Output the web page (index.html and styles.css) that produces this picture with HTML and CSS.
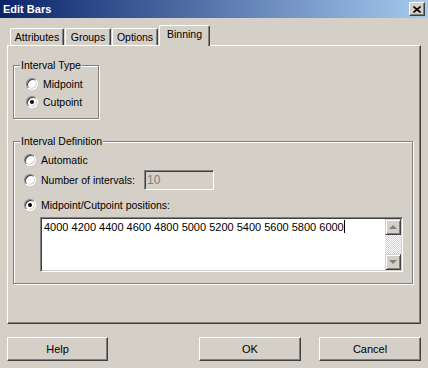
FILE: index.html
```html
<!DOCTYPE html>
<html lang="en">

<head>
    <meta charset="UTF-8">
    <title>Edit Bars</title>
    <link rel="stylesheet" href="styles.css">
</head>

<body>
    <div class="window">
        <div class="titlebar">
            <span class="title">Edit Bars</span>
            <span class="close-btn">
                <svg width="8" height="7" viewBox="0 0 8 7">
                    <path d="M0.5 0.5 L7.5 6.5 M7.5 0.5 L0.5 6.5" stroke="#000" stroke-width="1.6" fill="none"/>
                </svg>
            </span>
        </div>

        <div class="content">
            <div class="tabs">
                <div class="tab tab-attributes">Attributes</div>
                <div class="tab tab-groups">Groups</div>
                <div class="tab tab-options">Options</div>
                <div class="tab tab-binning active">Binning</div>
            </div>

            <div class="panel">
                <div class="group group-type">
                    <span class="group-label">Interval Type</span>
                    <div class="option">
                        <span class="radio"></span>
                        <span>Midpoint</span>
                    </div>
                    <div class="option">
                        <span class="radio checked"></span>
                        <span>Cutpoint</span>
                    </div>
                </div>

                <div class="group group-def">
                    <span class="group-label">Interval Definition</span>
                    <div class="option">
                        <span class="radio"></span>
                        <span>Automatic</span>
                    </div>
                    <div class="option option-count">
                        <span class="radio"></span>
                        <span>Number of intervals:</span>
                        <span class="count-field">10</span>
                    </div>
                    <div class="option option-positions">
                        <span class="radio checked"></span>
                        <span>Midpoint/Cutpoint positions:</span>
                    </div>
                    <div class="positions">
                        <div class="positions-text">4000 4200 4400 4600 4800 5000 5200 5400 5600 5800 6000<span class="caret"></span></div>
                        <div class="scrollbar">
                            <span class="scroll-btn"><span class="arrow up"></span></span>
                            <span class="scroll-track"></span>
                            <span class="scroll-btn"><span class="arrow down"></span></span>
                        </div>
                    </div>
                </div>
            </div>

            <div class="buttons">
                <button class="btn btn-help">Help</button>
                <span class="spacer"></span>
                <button class="btn">OK</button>
                <button class="btn">Cancel</button>
            </div>
        </div>
    </div>
</body>

</html>
```

FILE: styles.css
```css
* {
    box-sizing: border-box;
}

body {
    margin: 0;
    background: #d4d0c8;
    font-family: "Liberation Sans", Arial, sans-serif;
    font-size: 10.5px;
    color: #000;
}

.window {
    width: 428px;
    height: 368px;
    background: #d4d0c8;
}

/* title bar */
.titlebar {
    height: 18px;
    display: flex;
    align-items: center;
    justify-content: space-between;
    padding: 0 3px 0 3px;
    background: linear-gradient(to right, #0a246a, #a6caf0);
}

.title {
    color: #fff;
    font-weight: bold;
    font-size: 11px;
}

.close-btn {
    width: 16px;
    height: 14px;
    display: flex;
    align-items: center;
    justify-content: center;
    background: #d4d0c8;
    border: 1px solid;
    border-color: #fff #404040 #404040 #fff;
    box-shadow: inset -1px -1px 0 #808080;
}

.content {
    padding: 0 7px;
}

/* tabs */
.tabs {
    display: flex;
    align-items: flex-end;
    height: 27px;
    padding-left: 3px;
}

.tab {
    height: 17px;
    margin-right: 1px;
    display: flex;
    align-items: center;
    justify-content: center;
    border-top: 1px solid #fff;
    border-left: 1px solid #fff;
    border-right: 1px solid #404040;
    border-radius: 2px 2px 0 0;
    box-shadow: inset -1px 0 0 #808080;
    padding-bottom: 1px;
}

.tab-attributes {
    width: 54px;
}

.tab-groups {
    width: 46px;
}

.tab-options {
    width: 46px;
}

.tab-binning {
    width: 51px;
}

.tab.active {
    height: 21px;
    margin-bottom: -1px;
    position: relative;
    z-index: 1;
    background: #d4d0c8;
    padding-bottom: 4px;
}

/* panel */
.panel {
    height: 279px;
    border-top: 1px solid #fff;
    border-left: 1px solid #fff;
    border-right: 1px solid #404040;
    border-bottom: 1px solid #404040;
    box-shadow: inset -1px -1px 0 #808080;
    padding: 19px 7px 0 5px;
}

.group {
    position: relative;
    border: 1px solid #808080;
    box-shadow: 1px 1px 0 #fff, inset 1px 1px 0 #fff;
}

.group-label {
    position: absolute;
    top: -7px;
    left: 6px;
    padding: 0 1px;
    background: #d4d0c8;
    line-height: 13px;
}

.group-type {
    width: 86px;
    height: 54px;
    padding: 9px 0 0 12px;
}

.group-def {
    width: 400px;
    height: 143px;
    margin-top: 22px;
    padding: 9px 0 0 10px;
}

.option {
    height: 18px;
    display: flex;
    align-items: center;
    gap: 5px;
}

.option-count {
    height: 20px;
    margin-top: 1px;
}

.option-positions {
    margin-top: 6px;
}

/* radio buttons */
.radio {
    width: 12px;
    height: 12px;
    flex-shrink: 0;
    border-radius: 50%;
    background: #fff;
    border: 1px solid;
    border-color: #808080 #fff #fff #808080;
    box-shadow: inset 1px 1px 0 #404040, inset -1px -1px 0 #d4d0c8;
    display: flex;
    align-items: center;
    justify-content: center;
}

.radio.checked::after {
    content: "";
    width: 4px;
    height: 4px;
    border-radius: 50%;
    background: #000;
}

.count-field {
    width: 70px;
    height: 20px;
    margin-left: 4px;
    padding: 2px 2px;
    color: #808080;
    font-size: 12px;
    border: 1px solid;
    border-color: #808080 #fff #fff #808080;
    box-shadow: inset 1px 1px 0 #404040, inset -1px -1px 0 #d4d0c8;
}

/* positions box */
.positions {
    width: 363px;
    height: 55px;
    margin: 3px 0 0 16px;
    display: flex;
    background: #fff;
    border: 1px solid;
    border-color: #808080 #fff #fff #808080;
    box-shadow: inset 1px 1px 0 #404040, inset -1px -1px 0 #d4d0c8;
    padding: 1px 1px 1px 2px;
}

.positions-text {
    flex: 1;
    padding: 1px 0 0 1px;
    font-size: 11px;
    line-height: 13px;
}

.caret {
    display: inline-block;
    width: 1px;
    height: 13px;
    background: #000;
    vertical-align: -2px;
}

.scrollbar {
    width: 16px;
    display: flex;
    flex-direction: column;
}

.scroll-btn {
    height: 16px;
    display: flex;
    align-items: center;
    justify-content: center;
    background: #d4d0c8;
    border: 1px solid;
    border-color: #d4d0c8 #404040 #404040 #d4d0c8;
    box-shadow: inset 1px 1px 0 #fff, inset -1px -1px 0 #808080;
}

.scroll-track {
    flex: 1;
    background-color: #fff;
    background-image: repeating-conic-gradient(#d4d0c8 0 25%, #fff 0 50%);
    background-size: 2px 2px;
}

.arrow {
    width: 0;
    height: 0;
    border-left: 4px solid transparent;
    border-right: 4px solid transparent;
}

.arrow.up {
    border-bottom: 4px solid #808080;
}

.arrow.down {
    border-top: 4px solid #808080;
}

/* bottom buttons */
.buttons {
    display: flex;
    gap: 18px;
    margin-top: 13px;
}

.spacer {
    flex: 1;
}

.btn {
    width: 102px;
    height: 24px;
    padding: 0;
    font-family: "Liberation Sans", Arial, sans-serif;
    font-size: 11px;
    color: #000;
    background: #d4d0c8;
    border: 1px solid;
    border-color: #fff #404040 #404040 #fff;
    box-shadow: inset -1px -1px 0 #808080;
}

.btn-help {
    width: 101px;
}
```
